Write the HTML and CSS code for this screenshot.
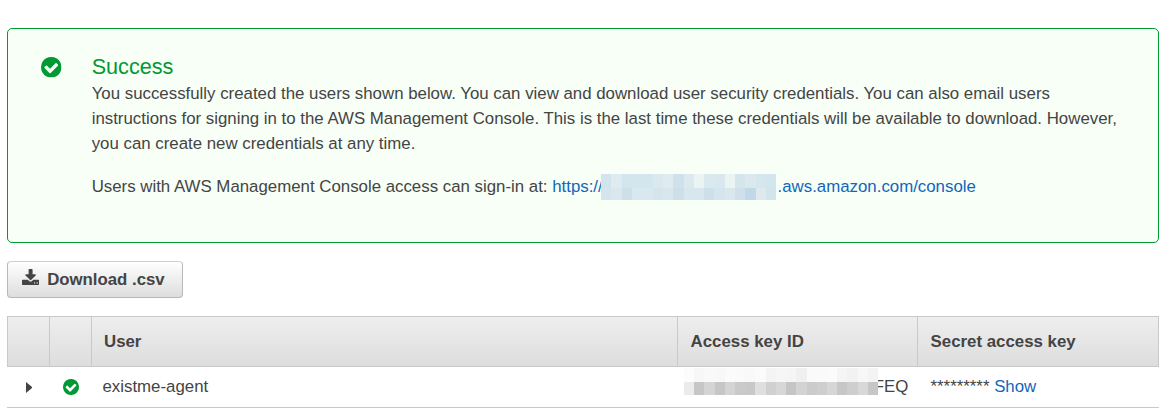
FILE: index.html
```html
<!DOCTYPE html>
<html lang="en">
<head>
<meta charset="utf-8">
<title>Add user</title>
<link rel="stylesheet" href="styles.css">
</head>
<body>
<svg width="0" height="0" class="defs">
  <symbol id="check" viewBox="0 0 1536 1536"><path d="M1284 606q0-28-18-46l-91-90q-19-19-45-19t-45 19l-408 407-226-226q-19-19-45-19t-45 19l-91 90q-18 18-18 46 0 27 18 45l362 362q19 19 45 19 27 0 46-19l543-543q18-18 18-45zm252 162q0 209-103 385.5t-279.5 279.5-385.5 103-385.5-103-279.5-279.5-103-385.5 103-385.5 279.5-279.5 385.5-103 385.5 103 279.5 279.5 103 385.5z"/></symbol>
</svg>
<section class="alert">
  <svg class="alert-icon"><use href="#check"/></svg>
  <div class="alert-body">
    <h2>Success</h2>
    <p>You successfully created the users shown below. You can view and download user security credentials. You can also email users<br>instructions for signing in to the AWS Management Console. This is the last time these credentials will be available to download. However,<br>you can create new credentials at any time.</p>
    <p class="signin"><span>Users with AWS Management Console access can sign-in at:&nbsp;</span><a class="link url"><span class="scheme">https://</span><span class="mosaic account" id="account"></span><span>.aws.amazon.com/console</span></a></p>
  </div>
</section>
<button class="download">
  <svg viewBox="0 0 1664 1536"><path d="M1280 1344q0-26-19-45t-45-19-45 19-19 45 19 45 45 19 45-19 19-45zm256 0q0-26-19-45t-45-19-45 19-19 45 19 45 45 19 45-19 19-45zm128-224v320q0 40-28 68t-68 28h-1472q-40 0-68-28t-28-68v-320q0-40 28-68t68-28h465l135 136q58 56 136 56t136-56l136-136h464q40 0 68 28t28 68zm-325-569q17 41-14 70l-448 448q-18 19-45 19t-45-19l-448-448q-31-29-14-70 17-39 59-39h256v-448q0-26 19-45t45-19h256q26 0 45 19t19 45v448h256q42 0 59 39z"/></svg>
  <span>Download .csv</span>
</button>
<div class="table">
  <div class="row head">
    <div></div><div></div><div>User</div><div>Access key ID</div><div>Secret access key</div>
  </div>
  <div class="row item">
    <div class="center"><svg class="caret" viewBox="0 0 6 10"><path d="M0 0L6 5L0 10z"/></svg></div>
    <div class="center"><svg class="status"><use href="#check"/></svg></div>
    <div class="name">existme-agent</div>
    <div class="key"><span class="mosaic hidden-key" id="key"></span><span class="tail">FEQ</span></div>
    <div class="secret">*********&nbsp;<a class="link">Show</a></div>
  </div>
</div>
<script src="mosaic.js"></script>
</body>
</html>
```
FILE: styles.css
```css
* { box-sizing: border-box; }
body {
  margin: 0;
  padding: 28px 16px 0 7px;
  background: #fff;
  color: #444;
  font: 16.83px/25px "Liberation Sans", Arial, sans-serif;
}
.defs { position: absolute; }
.alert {
  display: flex;
  height: 215px;
  padding: 24px 0 0 33px;
  border: 1px solid #093;
  border-radius: 5px;
  background: #f7fff7;
}
.alert-icon { flex: none; width: 20.5px; height: 20.5px; margin: 4px 30.2px 0 0; fill: #093; }
h2 { margin: 0; color: #093; font-size: 21.6px; font-weight: 400; line-height: 28px; }
p { margin: 0; white-space: nowrap; }
.signin { display: flex; margin-top: 18px; }
.link { color: #1166bb; }
.url { display: flex; }
.scheme { width: 49px; }
.mosaic { display: grid; flex: none; position: relative; height: 26px; }
.account { width: 175px; margin: 0 1.4px 0 0; grid-template: 14px 12px / repeat(17, 1fr); }
.hidden-key { width: 194px; height: 27px; margin-top: 1px; grid-template: 14px 13px / repeat(19, 1fr); z-index: 1; }
.download {
  display: flex;
  align-items: center;
  width: 176px;
  height: 37px;
  margin: 18px 0;
  padding: 0 0 0 14px;
  border: 1px solid #b8b8b8;
  border-top-color: #d0d0d0;
  border-radius: 4px;
  background: linear-gradient(#fff, #ddd);
  color: #444;
  font: bold 16.8px/25px "Liberation Sans", Arial, sans-serif;
}
.download svg { width: 17.2px; height: 16px; margin: -5px 8px 0 0; fill: #444; }
.row { display: grid; grid-template-columns: 42px 42px 586px 240px 242px; }
.head {
  height: 51px;
  border: 1px solid #c9c9c9;
  background: linear-gradient(#eee, #ddd);
  font-weight: bold;
  line-height: 49px;
  grid-template-columns: 42px 42px 586px 240px 240px;
}
.head div { padding-left: 12px; border-right: 1px solid #c9c9c9; }
.head div:nth-child(n+4) { padding-left: 12.6px; }
.head div:last-child { border-right: 0; }
.item { height: 41px; border-bottom: 1px solid #c9c9c9; line-height: 39px; }
.center { display: flex; align-items: center; justify-content: center; }
.caret { width: 6.5px; height: 11px; margin-left: 2px; fill: #444; }
.status { width: 16px; height: 16px; margin-left: 2.4px; fill: #093; }
.name { padding-left: 11.5px; }
.key { display: flex; padding-left: 7px; }
.tail { margin-left: -4.2px; }
.secret { padding-left: 13.5px; }
```
FILE: mosaic.js
```js
// Fills the redacted areas with rows of coloured cells.
const mosaics = {
  account: 'd3e5ec deebf1 d4e6ed d3e6ed d3e6ee dbe9ef deebf1 cfe1eb dce9f0 eaf4f2 dae9ee d8e8ee eaf4f3 d4e5ec dbe9ef d5e6ec d3e6ed ' +
    'd4e5ec dae8ee cde0ea d8e8ee d8e8ee d5e5ec d8e7ed cde0ea d7e7ee d8e7ef cde0ea d5e5ed dae8ee cfe0ea c2d8e7 dde9ef d3e5ec',
  key: 'fcfcfc f7f7f7 f9f9f9 f8f8f8 fbfbfb fafafa f9f9f9 fbfbfb f4f4f4 f6f6f6 f5f5f5 f0f0f0 fafafa fafafa fbfbfb f5f5f5 f2f2f2 f7f7f7 f3f3f3 ' +
    'ebebeb c6c6c6 d4d4d4 c6c6c6 d4d4d4 cacaca c8c8c8 dfdfdf d0d0d0 d7d7d7 c5c5c5 d3d3d3 cbcbcb cecece d6d6d6 c7c7c7 cecece d8d8d8 c6c6c6'
};
for (const [id, colors] of Object.entries(mosaics)) {
  for (const color of colors.split(' ')) {
    const cell = document.createElement('i');
    cell.style.background = '#' + color;
    document.getElementById(id).append(cell);
  }
}
```
